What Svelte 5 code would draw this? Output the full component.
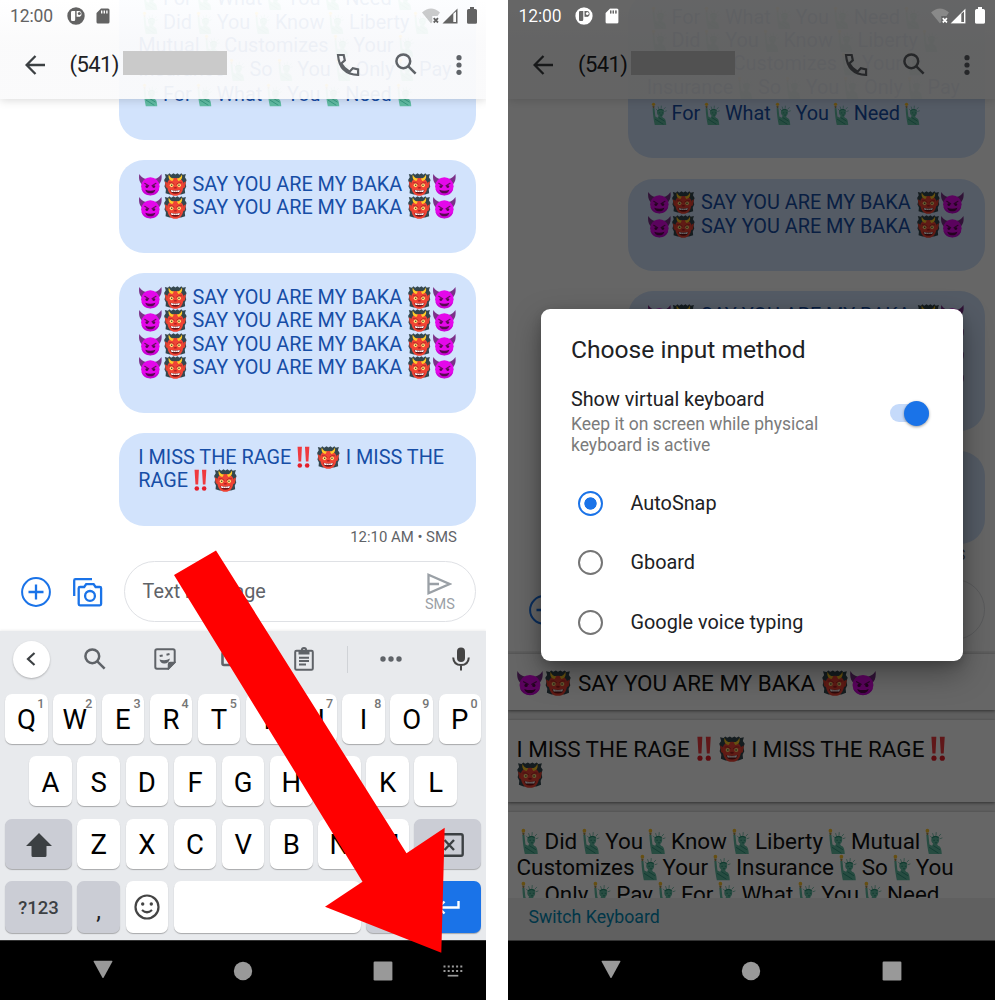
<script>
  const baka = '😈👹 SAY YOU ARE MY BAKA 👹😈';
  const messages = [
    [
      '🗽For🗽What🗽You🗽Need🗽',
      '🗽Did🗽You🗽Know🗽Liberty🗽',
      'Mutual🗽Customizes🗽Your🗽',
      'Insurance🗽So🗽You🗽Only🗽Pay',
      '🗽For🗽What🗽You🗽Need🗽'
    ],
    [baka, baka],
    [baka, baka, baka, baka],
    ['I MISS THE RAGE‼👹 I MISS THE', 'RAGE‼👹']
  ];
  const snippets = [
    [baka],
    ['I MISS THE RAGE‼👹 I MISS THE RAGE‼', '👹'],
    [
      '🗽Did🗽You🗽Know🗽Liberty🗽Mutual🗽',
      'Customizes🗽Your🗽Insurance🗽So🗽You',
      '🗽Only🗽Pay🗽For🗽What🗽You🗽Need'
    ]
  ];
  const row1 = [...'QWERTYUIOP'];
  const row2 = [...'ASDFGHJKL'];
  const row3 = [...'ZXCVBNM'];
  const methods = ['AutoSnap', 'Gboard', 'Google voice typing'];
  let selected = $state('AutoSnap');

  const tokens = (line) => line.split(/(😈|👹|🗽|‼)/u).filter((t) => t !== '');
</script>

{#snippet rich(line)}
  <div class="line">{#each tokens(line) as t}{#if t === '😈'}<svg class="emoji" viewBox="0 0 136 128"><path d="M7 5C3 30 8 54 26 66L60 34C34 34 16 22 7 5zM129 5c4 25-1 49-19 61L76 34c26 0 44-12 53-29z" fill="#7b3189" /><ellipse cx="68" cy="73" rx="51" ry="49" fill="#e408ea" /><path d="M19 88a51 49 0 0 0 98 0c-18 26-80 26-98 0z" fill="#c905d6" /><path d="M37 57l22 13M99 57L77 70" stroke="#67105f" stroke-width="6" stroke-linecap="round" /><ellipse cx="49" cy="75" rx="8" ry="8" fill="#57094f" /><ellipse cx="87" cy="75" rx="8" ry="8" fill="#57094f" /><path d="M40 92q28 12 56 0c-4 27-52 27-56 0z" fill="#57094f" /></svg>{:else if t === '👹'}<svg class="emoji" viewBox="0 0 136 128"><path d="M10 6l17 4 8-8 10 7 13-7 10 6 12-6 10 7 11-7 8 8 17-4-5 18 9 14-6 18 4 18-8 17 2 20-22 8H36l-22-8 2-20-8-17 4-18-6-18 9-14z" fill="#34474f" /><path d="M24 54L10 46l5 32 14 8zM112 54l14-8-5 32-14 8z" fill="#e4402f" /><path d="M68 28c-32 0-46 15-45 41 1 35 17 57 45 57s44-22 45-57c1-26-13-41-45-41z" fill="#f04435" /><path d="M32 8c-5 21 4 33 20 36l8-13C45 29 36 21 32 8zM104 8c5 21-4 33-20 36l-8-13c15-2 24-10 28-23z" fill="#ffca28" /><path d="M32 54q17-7 31 9M104 54q-17-7-31 9" fill="none" stroke="#a82422" stroke-width="4" /><circle cx="47" cy="68" r="10" fill="#ffe67b" /><circle cx="89" cy="68" r="10" fill="#ffe67b" /><circle cx="48" cy="68" r="4" fill="#3e2723" /><circle cx="88" cy="68" r="4" fill="#3e2723" /><path d="M58 81q10-8 20 0l-4 5H62z" fill="#a91f20" /><path d="M40 92q28 9 56 0-2 22-28 22T40 92z" fill="#6d1518" /><path d="M43 94q25 7 50 0l-4 11H47z" fill="#fff" /><path d="M58 96v9M68 97v9M78 96v9" stroke="#8f1d20" stroke-width="2" /></svg>{:else if t === '🗽'}<svg class="emoji" viewBox="0 0 136 128"><path d="M30 22l12 1-3 13h-6z" fill="#a58d52" /><circle cx="36" cy="13" r="9" fill="#ffc52e" /><path d="M31 34h10l5 46 13 7 5-11c-11-7-13-25-1-34 12-8 29-2 30 15 1 10-4 17-10 21l5 9c12 3 17 14 18 41H43c-5-24-11-58-12-94z" fill="#62bda4" /><path d="M59 48L49 38M66 40l-5-15M78 37l1-17M90 42l12-13M95 53l14-5" stroke="#55b099" stroke-width="3.500" /><path d="M57 49q20-17 36 1" fill="none" stroke="#299376" stroke-width="5" /><path d="M65 60h8M82 60h7M73 72h10M44 94l46 29M65 86l32 20" fill="none" stroke="#2f947c" stroke-width="4.500" /></svg>{:else if t === '‼'}<svg class="emoji" viewBox="0 0 136 128"><path d="M36 4h24l-4 81H41zM77 4h24l-5 81H82z" fill="#ef3a3f" /><circle cx="48.500" cy="108" r="12.500" fill="#e51e2a" /><circle cx="89" cy="108" r="12.500" fill="#e51e2a" /></svg>{:else}<span>{t}</span>{/if}{/each}</div>
{/snippet}

{#snippet searchIcon()}
  <svg class="search" viewBox="0 0 22 22" fill="none" stroke="currentColor" stroke-width="2.500"><circle cx="8.300" cy="8.300" r="6.900" /><path d="M13.300 13.300l7.300 7.300" /></svg>
{/snippet}

{#snippet statusBar()}
  <div class="status">
    <span class="clock">12:00</span>
    <svg class="pocket" viewBox="0 0 18 18"><path fill="currentColor" fill-rule="evenodd" d="M9 .3a8.700 8.700 0 1 1 0 17.400A8.700 8.700 0 0 1 9 .3zM4 5.400v7.200q0 1.500 1.300 1.500h1.600q1.300 0 1.300-1.500V4H5.400Q4 4 4 5.400zM9.600 4v5.800h1.900q3-.2 3-2.900T11.500 4z" /><circle cx="12.300" cy="6.500" r="1.500" fill="currentColor" /></svg>
    <svg class="sd" viewBox="0 0 14 16"><path fill="currentColor" fill-rule="evenodd" d="M5 .5h7q1.500 0 1.500 1.500v12q0 1.500-1.500 1.500H2Q.5 15.500.5 14V5zM5 2.500v3h1.400v-3zm2.600 0v3H9v-3zm2.600 0v3h1.400v-3z" /></svg>
    <svg class="wifi" viewBox="0 0 18 16"><path d="M9 15.500L0 4.500Q9-3.500 18 4.500L15.500 8h-5.200v6z" fill="currentColor" opacity=".32" /><path d="M11.700 10.200l4.300 4.300M16 10.200l-4.300 4.300" stroke="currentColor" stroke-width="1.800" /></svg>
    <svg class="signal" viewBox="0 0 16 16"><path d="M15.500.5v15H.5z" fill="currentColor" /><path d="M11.300 5.800l2.700-2.400v10.600h-2.700z" class="slot" /></svg>
    <svg class="battery" viewBox="0 0 10 17"><path d="M3 0h4v2h1.500Q10 2 10 3.500v12q0 1.300-1.500 1.300h-7Q0 16.800 0 15.500v-12Q0 2 1.500 2H3z" fill="currentColor" /></svg>
  </div>
{/snippet}

{#snippet chat()}
  <div class="thread">
    {#each messages as lines, i}
      <div class="bubble" class:first={i === 0}>
        {#each lines as line}{@render rich(line)}{/each}
      </div>
    {/each}
    <div class="stamp">12:10 AM • SMS</div>
  </div>
  <div class="composer">
    <svg class="plus" viewBox="0 0 30 30" fill="none" stroke="currentColor" stroke-width="2"><circle cx="15" cy="15" r="13.900" /><path d="M15 7.500v15M7.500 15h15" stroke-width="2.300" /></svg>
    <svg class="camera" viewBox="0 0 30 29" fill="none" stroke="currentColor" stroke-width="2.300"><path d="M1.200 18V2.500q0-1.300 1.300-1.300H19" /><path d="M7 9h4.200l2-2.900h7.400l2 2.900h4.200q1.300 0 1.300 1.300V26q0 1.300-1.300 1.300H7Q5.700 27.300 5.700 26V10.300Q5.700 9 7 9z" /><circle cx="17" cy="17.900" r="4.900" /></svg>
    <div class="field">
      <span>Text message</span>
      <div class="send">
        <svg viewBox="0 0 25 22" fill="none" stroke="currentColor" stroke-width="2.300"><path d="M1.500 1.800L22.500 11 1.500 20.200zM1.500 11H12" /></svg>
        <small>SMS</small>
      </div>
    </div>
  </div>
{/snippet}

{#snippet header()}
  <header>
    {@render statusBar()}
    <div class="appbar">
      <svg class="back" viewBox="0 0 20 20" fill="none" stroke="currentColor" stroke-width="2.300"><path d="M10.500 1L1.600 10l8.900 9M1.600 10H20" /></svg>
      <span class="number">(541)</span>
      <span class="redacted"></span>
      <svg class="phoneicon" viewBox="0 0 24 24" fill="none" stroke="currentColor" stroke-width="2.200"><path d="M2 2h5.700l1.100 5.300-3.500 3.200Q8 15.600 13.600 18.700l3.200-3.500 5.300 1.200v5.500Q3.500 21.500 2 2z" /></svg>
      {@render searchIcon()}
      <svg class="dots" viewBox="0 0 6 20" fill="currentColor"><circle cx="3" cy="2.700" r="2.600" /><circle cx="3" cy="10" r="2.600" /><circle cx="3" cy="17.300" r="2.600" /></svg>
    </div>
  </header>
{/snippet}

{#snippet nav(withKeyboard)}
  <nav>
    <svg class="backkey" viewBox="0 0 20 20"><path d="M1.200 .8h17.600q1 0 .5 1L10.700 17.600q-.7 1-1.400 0L.7 1.800Q.2.8 1.200.8z" fill="#999" /></svg>
    <svg viewBox="0 0 20 20"><circle cx="10" cy="10" r="9.200" fill="#999" /></svg>
    <svg viewBox="0 0 20 20"><rect x=".6" y=".6" width="18.800" height="18.800" rx="1.200" fill="#999" /></svg>
    {#if withKeyboard}
      <svg class="imeswitch" viewBox="0 0 20 12" stroke="#999" stroke-width="2" fill="none"><path d="M.5 1.500h19M.5 6h19" stroke-dasharray="2 2.200" /><path d="M4.700 10.700h10.600" stroke-width="1.700" /></svg>
    {/if}
  </nav>
{/snippet}

<div class="stage">
  <section class="phone left">
    {@render chat()}
    <div class="keyboard">
      <div class="tools">
        <span class="chev"><svg viewBox="0 0 10 14" fill="none" stroke="currentColor" stroke-width="2.200"><path d="M8.500 1L2 7l6.500 6" /></svg></span>
        <span class="tool">{@render searchIcon()}</span>
        <span class="tool"><svg class="sticker" viewBox="0 0 22 22" fill="none" stroke="currentColor" stroke-width="2"><path d="M3 1.300h16q1.700 0 1.700 1.700v11.200l-6.500 6.500H3Q1.300 20.700 1.300 19V3Q1.300 1.300 3 1.300z" /><path d="M20.700 14.500h-4.500q-1.700 0-1.700 1.700v4.500z" fill="currentColor" stroke-width="1.500" /><path d="M5.500 11.500q6 2 10.500-1-1.500 5.500-6 5-3.500-.2-4.500-4z" fill="currentColor" stroke="none" /><path d="M5.700 8l3-.6M12.500 6.700l3-.6" /></svg></span>
        <span class="tool"><svg class="gif" viewBox="0 0 28 16" fill="none" stroke="currentColor" stroke-width="2.600"><rect x="1.500" y="1.500" width="25" height="12.500" rx="1.500" /></svg></span>
        <span class="tool"><svg class="clip" viewBox="0 0 20 24" fill="none" stroke="currentColor" stroke-width="2"><rect x="1.200" y="3.700" width="17.600" height="19" rx="1.300" /><path d="M4.500 3.500h11v4h-11z" fill="currentColor" stroke="none" /><circle cx="10" cy="3.200" r="2.100" /><path d="M5 10.700h10M5 14h10M5 17.500h7" /></svg></span>
        <span class="bar"></span>
        <svg class="more" viewBox="0 0 22 6" fill="currentColor"><circle cx="3" cy="3" r="2.700" /><circle cx="11" cy="3" r="2.700" /><circle cx="19" cy="3" r="2.700" /></svg>
        <svg class="mic" viewBox="0 0 18 24" fill="none" stroke="currentColor" stroke-width="2"><rect x="5" y=".5" width="8" height="14.500" rx="4" fill="currentColor" stroke="none" /><path d="M1.200 10.500q.4 7.500 7.800 7.500t7.800-7.500M9 18v5.500" /></svg>
      </div>
      <div class="keys">
        {#each row1 as k, i}<div class="key">{k}<sup>{(i + 1) % 10}</sup></div>{/each}
      </div>
      <div class="keys">
        {#each row2 as k}<div class="key">{k}</div>{/each}
      </div>
      <div class="keys">
        <div class="key wide gray"><svg class="shift" viewBox="0 0 26 24"><path d="M13 0l13 13h-5.500v9.500q0 1.500-1.500 1.500H7q-1.500 0-1.500-1.500V13H0z" fill="currentColor" /></svg></div>
        {#each row3 as k}<div class="key">{k}</div>{/each}
        <div class="key wide gray"><svg class="del" viewBox="0 0 32 24" fill="none" stroke="currentColor" stroke-width="2.400"><path d="M9 1.200h20q1.700 0 1.700 1.700v18.200q0 1.700-1.700 1.700H9L1.500 12z" /><path d="M12.500 7l9.500 10M22 7l-9.500 10" /></svg></div>
      </div>
      <div class="keys tall">
        <div class="key wide gray sym">?123</div>
        <div class="key gray comma">,</div>
        <div class="key"><svg class="smile" viewBox="0 0 26 26" fill="none" stroke="currentColor" stroke-width="2.200"><circle cx="13" cy="13" r="11.500" /><path d="M8 16q5 4.500 10 0" /><circle cx="8.700" cy="10" r="1.700" fill="currentColor" stroke="none" /><circle cx="17.300" cy="10" r="1.700" fill="currentColor" stroke="none" /></svg></div>
        <div class="key space"></div>
        <div class="key gray comma">.</div>
        <div class="key wide enter"><svg viewBox="0 0 24 16" fill="none" stroke="#fff" stroke-width="2.400"><path d="M22.500 2v6.500H3M8.500 2.500L2.500 8.500l6 6" /></svg></div>
      </div>
    </div>
    {@render nav(true)}
    {@render header()}
  </section>

  <section class="phone right">
    {@render chat()}
    <div class="panel">
      <div class="cards">
        {#each snippets as lines}
          <div class="card">{#each lines as line}{@render rich(line)}{/each}</div>
        {/each}
      </div>
      <div class="switch">Switch Keyboard</div>
    </div>
    {@render nav(false)}
    {@render header()}
    <div class="scrim"></div>
    <div class="overstatus">{@render statusBar()}</div>
    <div class="dialog">
      <h2>Choose input method</h2>
      <div class="setting">
        <div>
          <h3>Show virtual keyboard</h3>
          <p>Keep it on screen while physical<br />keyboard is active</p>
        </div>
        <span class="toggle"><i></i></span>
      </div>
      {#each methods as m}
        <button class="option" onclick={() => (selected = m)}>
          <span class="radio" class:on={selected === m}></span>{m}
        </button>
      {/each}
    </div>
  </section>

  <svg class="pointer" viewBox="0 0 1000 1000"><path d="M174 575L216 550.500 406.500 853.300 444.700 827.700 441.300 952.700 325 906.700 362.500 881.700z" fill="#f00" /></svg>
</div>

<style>
  :global(body) { background: #fff; }
  .stage {
    position: relative;
    width: 1000px;
    height: 1000px;
    display: flex;
    gap: 22.200px;
    overflow: hidden;
    font-family: Roboto, sans-serif;
    background: #fff;
  }
  .stage :is(svg) { flex: none; display: block; }
  .phone {
    position: relative;
    width: 486.300px;
    height: 1000px;
    flex: none;
    display: flex;
    flex-direction: column;
    overflow: hidden;
    background: #fff;
  }
  .left { --thread: 555px; --composer: 76px; }
  .right { --thread: 573.3px; --composer: 78px; }

  .thread {
    height: var(--thread);
    flex: none;
    display: flex;
    flex-direction: column;
    justify-content: flex-end;
    align-items: flex-end;
    gap: 20.500px;
    padding-right: 10px;
    box-sizing: border-box;
    overflow: hidden;
  }
  .bubble {
    flex: none;
    width: 357px;
    box-sizing: border-box;
    padding: 12.600px 0 33px 18.900px;
    border-radius: 25px;
    background: #d2e3fc;
    color: #174ea6;
    font-size: 19.850px;
    --lh: 23.450px;
  }
  .bubble.first .line:last-child { margin-top: 2.300px; }
  .line {
    display: flex;
    height: var(--lh);
    line-height: var(--lh);
    white-space: pre;
  }
  .stage .emoji { width: 1.245em; height: 1.170em; }
  .stamp {
    margin: -19px 19.500px 8px 0;
    font-size: 14.900px;
    line-height: 20px;
    color: #5f6368;
  }

  .composer {
    height: var(--composer);
    flex: none;
    box-sizing: border-box;
    padding: 6px 10px 0 20.500px;
    display: flex;
    align-items: flex-start;
    color: #1a73e8;
  }
  .plus { width: 30px; height: 30px; margin-top: 16px; }
  .camera { width: 30px; height: 29px; margin: 16.500px 20.500px 0 22.800px; }
  .field {
    flex: 1;
    height: 61px;
    box-sizing: border-box;
    border: 1.300px solid #dfe1e5;
    border-radius: 31px;
    padding: 0 20.500px 0 17.800px;
    display: flex;
    align-items: center;
    justify-content: space-between;
    color: #5f6368;
    font-size: 19.800px;
  }
  .send { display: flex; flex-direction: column; align-items: center; color: #9aa0a6; gap: 2px; padding-top: 2px; }
  .send svg { width: 25px; height: 22px; }
  .send small { font-size: 14.500px; line-height: 16px; }

  header {
    position: absolute;
    inset: 0 0 auto 0;
    height: 99px;
    background: linear-gradient(rgba(255, 255, 255, .93), rgba(250, 250, 251, .94) 45%);
    box-shadow: 0 1px 9px rgba(0, 0, 0, .16);
    color: #5f6368;
  }
  .status {
    height: 31px;
    display: flex;
    align-items: center;
    color: #636363;
    --slot: #fafafa;
    padding-left: 10px;
  }
  .clock { font-size: 17.500px; width: 57px; letter-spacing: -.1px; }
  .pocket { width: 18px; height: 18px; }
  .sd { width: 14px; height: 16px; margin-left: 11.300px; }
  .wifi { width: 18px; height: 16px; margin-left: 312px; }
  .signal { width: 16px; height: 16px; margin-left: 1.500px; }
  .battery { width: 10px; height: 17px; margin-left: 9px; }
  .slot { fill: var(--slot); }
  .appbar { height: 67px; display: flex; align-items: center; }
  .back { width: 20px; height: 20px; margin-left: 25px; color: #3c4043; }
  .number { width: 53.500px; margin-left: 24.500px; font-size: 22px; letter-spacing: -.6px; color: #202124; }
  .redacted { width: 104px; height: 24px; margin-top: -2.500px; background: #cacaca; }
  .phoneicon { width: 24px; height: 24px; margin-left: 108.500px; }
  .search { width: 22px; height: 22px; }
  .appbar .search { margin-left: 35.500px; margin-top: -1px; }
  .dots { width: 6px; height: 20px; margin-left: 38.500px; }

  .keyboard {
    flex: 1;
    background: #e8eaed;
    box-shadow: 0 -1px 2px rgba(60, 64, 67, .08);
    color: #000;
  }
  .tools { height: 56px; display: flex; align-items: center; padding-left: 12.500px; margin-bottom: 7px; color: #5f6368; }
  .chev {
    width: 37px;
    height: 37px;
    border-radius: 50%;
    background: #fff;
    display: grid;
    place-items: center;
    box-shadow: 0 1px 2px rgba(0, 0, 0, .25);
    color: #3c4043;
  }
  .chev svg { width: 10px; height: 14px; }
  .tool { width: 69.700px; display: grid; place-items: center; }
  .tool:nth-child(2) { margin-left: 11px; }
  .sticker { width: 22px; height: 22px; }
  .gif { width: 28px; height: 16px; }
  .clip { width: 20px; height: 24px; }
  .bar { width: 1.500px; height: 27px; background: #d0d3d7; margin-left: 7.500px; }
  .more { width: 22px; height: 6px; margin-left: 32.200px; }
  .mic { width: 18px; height: 24px; margin-left: 49.500px; color: #444; }

  .keys { display: flex; justify-content: center; gap: 5.650px; height: 50px; margin-bottom: 12.400px; }
  .keys.tall { height: 52px; margin: 0; }
  .key {
    position: relative;
    width: 42.500px;
    flex: none;
    display: flex;
    align-items: center;
    justify-content: center;
    border-radius: 7px;
    background: #fff;
    box-shadow: 0 1px 1px rgba(0, 0, 0, .28);
    font-size: 27.500px;
    line-height: 50px;
    padding-top: 2.500px;
    box-sizing: border-box;
  }
  .key sup { position: absolute; top: 1.500px; right: 3.500px; font-size: 12.500px; line-height: 16px; color: #757575; font-weight: 500; }
  .gray { background: #cbcdd5; color: #3c4043; }
  .wide { width: 66.600px; }
  .sym { font-size: 18.500px; font-weight: 500; }
  .comma { color: #202124; font-size: 24px; padding-top: 8px; }
  .space { width: 187px; }
  .enter { background: #1a73e8; }
  .shift { width: 26px; height: 24px; }
  .del { width: 32px; height: 24px; }
  .smile { width: 26px; height: 26px; color: #444; margin-top: -3px; }
  .enter svg { width: 24px; height: 16px; margin-top: -2px; }

  nav {
    height: 60px;
    flex: none;
    box-sizing: border-box;
    background: #000;
    border-top: 1px solid #333;
    display: flex;
    align-items: center;
    padding-left: 92.800px;
    gap: 120.200px;
  }
  nav svg { width: 20px; height: 20px; }
  .backkey { margin-top: -1px; }
  nav .imeswitch { height: 12px; margin-left: -70px; }

  .panel { flex: 1; min-height: 0; display: flex; flex-direction: column; background: #eee; font-size: 22.450px; --lh: 26.200px; color: #111; }
  .cards { flex: 1; min-height: 0; overflow: hidden; display: flex; flex-direction: column; gap: 9.800px; padding-top: 3px; }
  .card { flex: none; padding: 16.200px 0 13.600px 8px; background: #fff; box-shadow: 0 1px 3px rgba(0, 0, 0, .5); }
  .switch { height: 42px; flex: none; box-sizing: border-box; padding: 0 0 5px 20px; line-height: 38px; font-size: 17.700px; color: #0288b4; background: #f0f0f0; }

  .scrim { position: absolute; inset: 0 0 60px 0; background: rgba(0, 0, 0, .6); }
  .overstatus { position: absolute; inset: 0 0 auto 0; }
  .overstatus .status { color: #fff; --slot: #666; }

  .dialog {
    position: absolute;
    left: 32.500px;
    top: 308.500px;
    width: 421.700px;
    height: 352.500px;
    box-sizing: border-box;
    padding: 25px 30px 0;
    border-radius: 9px;
    background: #fff;
    box-shadow: 0 12px 30px rgba(0, 0, 0, .35), 0 4px 10px rgba(0, 0, 0, .15);
    color: #202124;
  }
  h2, h3, p { margin: 0; font-weight: 400; }
  h2 { font-size: 24.600px; line-height: 32px; }
  .setting { display: flex; justify-content: space-between; align-items: center; margin: 22px 4px 18px 0; }
  h3 { font-size: 19.800px; line-height: 23px; }
  p { margin-top: 3.500px; font-size: 17.500px; line-height: 20.700px; color: #7b7b7b; }
  .toggle { width: 39px; height: 18px; margin-bottom: 16px; border-radius: 9px; background: #c5dafa; display: flex; align-items: center; justify-content: flex-end; }
  .toggle i { width: 25px; height: 25px; flex: none; border-radius: 50%; background: #1a73e8; box-shadow: 0 1px 3px rgba(0, 0, 0, .4); }
  .option {
    display: flex;
    align-items: center;
    width: 100%;
    height: 59.500px;
    padding: 0 0 0 7px;
    border: 0;
    background: none;
    font: 19.850px Roboto, sans-serif;
    color: #202124;
  }
  .radio { width: 25px; height: 25px; box-sizing: border-box; border: 2.500px solid #757575; border-radius: 50%; margin-right: 27.500px; }
  .radio.on { border-color: #1a73e8; background: radial-gradient(circle, #1a73e8 5.800px, transparent 6.500px); }

  .pointer { position: absolute; inset: 0; width: 1000px; height: 1000px; pointer-events: none; }
</style>
